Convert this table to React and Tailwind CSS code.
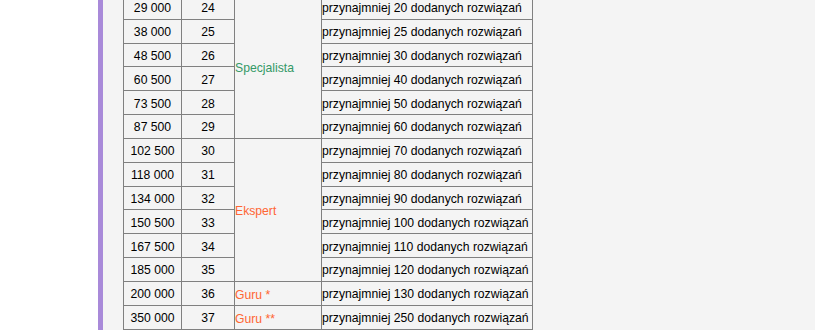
const rows = [
  ["29 000", 24, 20],
  ["38 000", 25, 25],
  ["48 500", 26, 30],
  ["60 500", 27, 40],
  ["73 500", 28, 50],
  ["87 500", 29, 60],
  ["102 500", 30, 70],
  ["118 000", 31, 80],
  ["134 000", 32, 90],
  ["150 500", 33, 100],
  ["167 500", 34, 110],
  ["185 000", 35, 120],
  ["200 000", 36, 130],
  ["350 000", 37, 250],
];

// rank cells: [row index where it starts, rowSpan, label, color]
const ranks = {
  0: { span: 6, label: "Specjalista", color: "text-[#339966]" },
  6: { span: 6, label: "Ekspert", color: "text-[#ff6633]" },
  12: { span: 1, label: "Guru *", color: "text-[#ff6633]" },
  13: { span: 1, label: "Guru **", color: "text-[#ff6633]" },
};

export default function App() {
  return (
    <div className="flex h-[330px] w-[815px] overflow-hidden bg-white font-['Liberation_Sans',Arial,sans-serif] text-[12.2px] text-black">
      <div className="w-[98px] shrink-0 bg-white" />
      <div className="w-[5px] shrink-0 bg-[#a98ad9]" />
      <div className="flex-1 bg-[#f4f4f4] pl-[20px]">
        <table className="mt-[-5px] w-[410px] table-fixed border-collapse">
          <colgroup>
            <col className="w-[58px]" />
            <col className="w-[53px]" />
            <col className="w-[87px]" />
            <col className="w-[211px]" />
          </colgroup>
          <tbody>
            {rows.map(([pts, lvl, n], i) => (
              <tr key={lvl} className="h-[23.83px]">
                <td className="border border-[#808080] p-0 pt-[2px] text-center">{pts}</td>
                <td className="border border-[#808080] p-0 pt-[2px] text-center">{lvl}</td>
                {ranks[i] && (
                  <td
                    rowSpan={ranks[i].span}
                    className={`border border-[#808080] p-0 pt-[3px] align-middle ${ranks[i].color}`}
                  >
                    {ranks[i].label}
                  </td>
                )}
                <td className="border border-[#808080] p-0 pt-[2px] whitespace-nowrap">
                  przynajmniej {n} dodanych rozwiązań
                </td>
              </tr>
            ))}
          </tbody>
        </table>
      </div>
    </div>
  );
}
